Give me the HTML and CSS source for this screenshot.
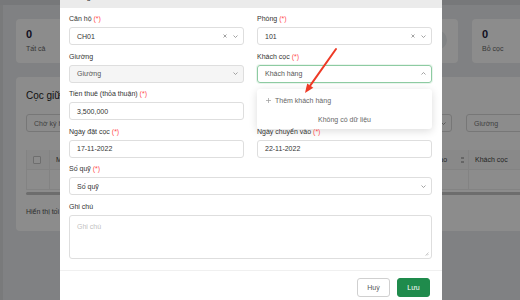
FILE: index.html
```html
<!DOCTYPE html>
<html lang="vi">
<head>
  <meta charset="UTF-8" />
  <title>Cọc giữ chỗ</title>
  <link rel="stylesheet" href="styles.css">
</head>
<body>

  <!-- Trang nền phía sau modal -->
  <div class="page">
    <div class="topbar"></div>
    <div class="main">
      <div class="side"></div>
      <div class="content">
        <div class="stats">
          <div class="stat"><b>0</b><span>Tất cả</span><i class="stat-icon"></i></div>
          <div class="stat"><b>0</b><span>Chờ ký hợp đồng</span><i class="stat-icon"></i></div>
          <div class="stat"><b>0</b><span>Đã ký hợp đồng</span><i class="stat-icon"></i></div>
          <div class="stat"><b>0</b><span>Đã hoàn cọc</span><i class="stat-icon"></i></div>
          <div class="stat"><b>0</b><span>Bỏ cọc</span><i class="stat-icon"></i></div>
        </div>

        <div class="panel">
          <div class="panel-title">Cọc giữ chỗ</div>
          <div class="filters">
            <div class="filter">Chờ ký hợp đồng <svg class="chev" viewBox="0 0 5 3"><path d="M0.5 0.5L2.5 2.5L4.5 0.5"/></svg></div>
            <div class="filter">Căn hộ <svg class="chev" viewBox="0 0 5 3"><path d="M0.5 0.5L2.5 2.5L4.5 0.5"/></svg></div>
            <div class="filter">Phòng <svg class="chev" viewBox="0 0 5 3"><path d="M0.5 0.5L2.5 2.5L4.5 0.5"/></svg></div>
            <div class="filter">Tầng <svg class="chev" viewBox="0 0 5 3"><path d="M0.5 0.5L2.5 2.5L4.5 0.5"/></svg></div>
            <div class="filter">Giường</div>
          </div>
          <div class="table">
            <div class="th"><span class="check"></span></div>
            <div class="th">Mã cọc</div>
            <div class="th">Căn hộ</div>
            <div class="th">Phòng</div>
            <div class="th">Ngày chuyển vào <span class="sort"></span></div>
            <div class="th">Khách cọc</div>
            <div class="th">Tiền cọc</div>
            <div class="td"></div>
            <div class="td"></div>
            <div class="td"></div>
            <div class="td"></div>
            <div class="td"></div>
            <div class="td"></div>
            <div class="td"></div>
          </div>
          <div class="scrollbar"></div>
          <div class="pager">Hiển thị tối đa 10 dòng</div>
        </div>
      </div>
    </div>
  </div>

  <div class="overlay"></div>

  <!-- Modal thêm cọc -->
  <div class="modal">
    <div class="modal-head">Cọc giữ chỗ</div>
    <div class="modal-body">
      <div class="form-grid">
        <div class="field">
          <label>Căn hộ <em>(*)</em></label>
          <div class="input">CH01
            <span class="suffix">
              <svg class="clear" viewBox="0 0 4 4"><path d="M0.5 0.5L3.5 3.5M3.5 0.5L0.5 3.5"/></svg>
              <svg class="chev" viewBox="0 0 5 3"><path d="M0.5 0.5L2.5 2.5L4.5 0.5"/></svg>
            </span>
          </div>
        </div>
        <div class="field">
          <label>Phòng <em>(*)</em></label>
          <div class="input">101
            <span class="suffix">
              <svg class="clear" viewBox="0 0 4 4"><path d="M0.5 0.5L3.5 3.5M3.5 0.5L0.5 3.5"/></svg>
              <svg class="chev" viewBox="0 0 5 3"><path d="M0.5 0.5L2.5 2.5L4.5 0.5"/></svg>
            </span>
          </div>
        </div>

        <div class="field">
          <label>Giường</label>
          <div class="input disabled">Giường
            <span class="suffix"><svg class="chev" viewBox="0 0 5 3"><path d="M0.5 0.5L2.5 2.5L4.5 0.5"/></svg></span>
          </div>
        </div>
        <div class="field">
          <label>Khách cọc <em>(*)</em></label>
          <div class="input focus">Khách hàng
            <span class="suffix"><svg class="chev" viewBox="0 0 5 3"><path d="M0.5 2.5L2.5 0.5L4.5 2.5"/></svg></span>
          </div>
          <div class="dropdown">
            <div class="dd-add"><svg class="plus" viewBox="0 0 5 5"><path d="M2.5 0V5M0 2.5H5"/></svg>Thêm khách hàng</div>
            <div class="dd-empty">Không có dữ liệu</div>
          </div>
        </div>

        <div class="field">
          <label>Tiền thuê (thỏa thuận) <em>(*)</em></label>
          <div class="input">3,500,000</div>
        </div>
        <div class="field"></div>

        <div class="field">
          <label>Ngày đặt cọc <em>(*)</em></label>
          <div class="input">17-11-2022</div>
        </div>
        <div class="field">
          <label>Ngày chuyển vào <em>(*)</em></label>
          <div class="input">22-11-2022</div>
        </div>

        <div class="field wide">
          <label>Số quỹ <em>(*)</em></label>
          <div class="input">Số quỹ
            <span class="suffix"><svg class="chev" viewBox="0 0 5 3"><path d="M0.5 0.5L2.5 2.5L4.5 0.5"/></svg></span>
          </div>
        </div>

        <div class="field wide">
          <label>Ghi chú</label>
          <div class="textarea">Ghi chú
            <svg class="grip" viewBox="0 0 4 4"><path d="M0.5 3.5L3.5 0.5M2 3.5L3.5 2"/></svg>
          </div>
        </div>
      </div>
    </div>
    <div class="modal-foot">
      <button class="btn">Huỷ</button>
      <button class="btn primary">Lưu</button>
    </div>
  </div>

  <!-- Mũi tên chú thích -->
  <svg class="arrow" viewBox="0 0 520 300">
    <path class="arrow-line" d="M336 49L310.5 85.2"/>
    <path class="arrow-head" d="M305 93L313.3 87.8L307.2 83.5Z"/>
  </svg>

</body>
</html>
```

FILE: styles.css
```css
body {
  margin: 0;
  width: 520px;
  height: 300px;
  overflow: hidden;
  position: relative;
  font-family: "Liberation Sans", Arial, sans-serif;
  color: #333;
}

/* ---- trang nền ---- */
.page {
  width: 640px;
  height: 300px;
  background: #e9ebee;
}

.topbar {
  height: 5px;
  background: #d9dbde;
}

.main {
  display: flex;
  height: 295px;
}

.side {
  width: 3px;
  background: #dcdee1;
}

.content {
  flex: 1;
  padding: 14px 0 0 13px;
}

.stats {
  display: flex;
  gap: 14px;
}

.stat {
  position: relative;
  width: 100px;
  height: 44px;
  box-sizing: border-box;
  padding: 9px 10px 0;
  background: #fff;
  border-radius: 4px;
  display: flex;
  flex-direction: column;
}

.stat b {
  font-size: 11px;
  line-height: 13px;
  color: #1f2140;
}

.stat span {
  margin-top: 3px;
  font-size: 7px;
  line-height: 10px;
  color: #666;
}

.stat-icon {
  position: absolute;
  right: 11px;
  top: 11px;
  width: 20px;
  height: 20px;
  border-radius: 50%;
  background: #eceef1;
}

.panel {
  margin-top: 14px;
  height: 154px;
  box-sizing: border-box;
  padding: 13px 10px 0;
  background: #fff;
  border-radius: 4px 0 0 4px;
}

.panel-title {
  font-size: 10px;
  line-height: 12px;
  color: #222;
}

.filters {
  display: flex;
  gap: 14px;
  margin-top: 12px;
}

.filter {
  width: 96px;
  height: 18px;
  flex-shrink: 0;
  box-sizing: border-box;
  padding: 0 5px 0 7px;
  border: 1px solid #d9d9d9;
  border-radius: 3px;
  display: flex;
  align-items: center;
  justify-content: space-between;
  font-size: 7px;
  color: #777;
}

.table {
  margin-top: 18px;
  display: grid;
  grid-template-columns: 23px 120px 110px 107px 82px 100px 1fr;
  border-left: 1px solid #eee;
}

.th, .td {
  height: 20px;
  box-sizing: border-box;
  border-bottom: 1px solid #eee;
  border-right: 1px solid #eee;
  display: flex;
  align-items: center;
  padding: 0 4px 0 6px;
  font-size: 7px;
  white-space: nowrap;
}

.th {
  background: #fafafa;
  color: #444;
}

.check {
  width: 6px;
  height: 6px;
  border: 1px solid #c8c8c8;
  border-radius: 1px;
  background: #fff;
}

.sort {
  margin-left: auto;
  width: 3px;
  height: 6px;
  background: linear-gradient(#bbb 40%, transparent 40%, transparent 60%, #bbb 60%);
}

.scrollbar {
  margin-top: 2px;
  height: 3px;
  background: #c6c6c6;
  border-radius: 2px;
}

.pager {
  margin-top: 12px;
  font-size: 7px;
  line-height: 10px;
  color: #555;
}

.overlay {
  position: absolute;
  inset: 0;
  background: rgba(0, 0, 0, 0.45);
}

/* ---- modal ---- */
.modal {
  position: absolute;
  left: 60px;
  top: -14px;
  width: 382px;
  background: #fff;
}

.modal-head {
  height: 22px;
  padding-left: 10px;
  background: #ebebeb;
  font-size: 8px;
  line-height: 22px;
  color: #444;
}

.modal-body {
  padding: 6px 10px 11.5px 9px;
}

.form-grid {
  display: grid;
  grid-template-columns: 1fr 1fr;
  column-gap: 13px;
  row-gap: 6.5px;
}

.field {
  position: relative;
}

.field.wide {
  grid-column: span 2;
}

.field label {
  display: block;
  margin-bottom: 3px;
  font-size: 7px;
  line-height: 10px;
  color: #333;
}

.field label em {
  font-style: normal;
  color: #ff4d4f;
}

.input {
  height: 18px;
  box-sizing: border-box;
  padding: 0 5px 0 7px;
  border: 1px solid #dedede;
  border-radius: 3px;
  display: flex;
  align-items: center;
  font-size: 7px;
  color: #333;
}

.input.disabled {
  background: #f5f5f5;
  color: #555;
}

.input.focus {
  border-color: #8dcba2;
  box-shadow: 0 0 0 1px rgba(82, 170, 110, 0.12);
  color: #555;
}

.suffix {
  margin-left: auto;
  display: flex;
  align-items: center;
  gap: 6px;
}

.chev {
  width: 5px;
  height: 3px;
  fill: none;
  stroke: #8c8c8c;
  stroke-width: 0.8;
}

.clear {
  width: 4px;
  height: 4px;
  fill: none;
  stroke: #8c8c8c;
  stroke-width: 0.8;
}

.textarea {
  position: relative;
  height: 44px;
  box-sizing: border-box;
  padding: 6px 7px;
  border: 1px solid #dedede;
  border-radius: 3px;
  font-size: 7px;
  line-height: 10px;
  color: #bfbfbf;
}

.grip {
  position: absolute;
  right: 2px;
  bottom: 2px;
  width: 4px;
  height: 4px;
  fill: none;
  stroke: #aaa;
  stroke-width: 0.6;
}

.dropdown {
  position: absolute;
  left: 0;
  right: 0;
  top: 37px;
  height: 40px;
  box-sizing: border-box;
  padding: 4px 0 0;
  background: #fff;
  border-radius: 3px;
  box-shadow: 0 2px 8px rgba(0, 0, 0, 0.14);
  font-size: 7px;
  color: #666;
}

.dd-add {
  height: 16px;
  padding-left: 9px;
  display: flex;
  align-items: center;
  gap: 4px;
}

.plus {
  width: 5px;
  height: 5px;
  fill: none;
  stroke: #999;
  stroke-width: 0.7;
}

.dd-empty {
  margin-top: 4px;
  height: 14px;
  line-height: 14px;
  text-align: center;
}

.modal-foot {
  border-top: 1px solid #f0f0f0;
  padding: 7px 12px 10px;
  display: flex;
  justify-content: flex-end;
  gap: 7px;
}

.btn {
  width: 33px;
  height: 19px;
  padding: 0;
  border: 1px solid #d0d0d0;
  border-radius: 3px;
  background: #fff;
  font-family: inherit;
  font-size: 7px;
  color: #555;
}

.btn.primary {
  background: #1f8b4c;
  border-color: #1f8b4c;
  color: #fff;
}

/* ---- mũi tên ---- */
.arrow {
  position: absolute;
  left: 0;
  top: 0;
  width: 520px;
  height: 300px;
}

.arrow-line {
  fill: none;
  stroke: #ee3a26;
  stroke-width: 2;
  stroke-linecap: round;
}

.arrow-head {
  fill: #ee3a26;
}
```
